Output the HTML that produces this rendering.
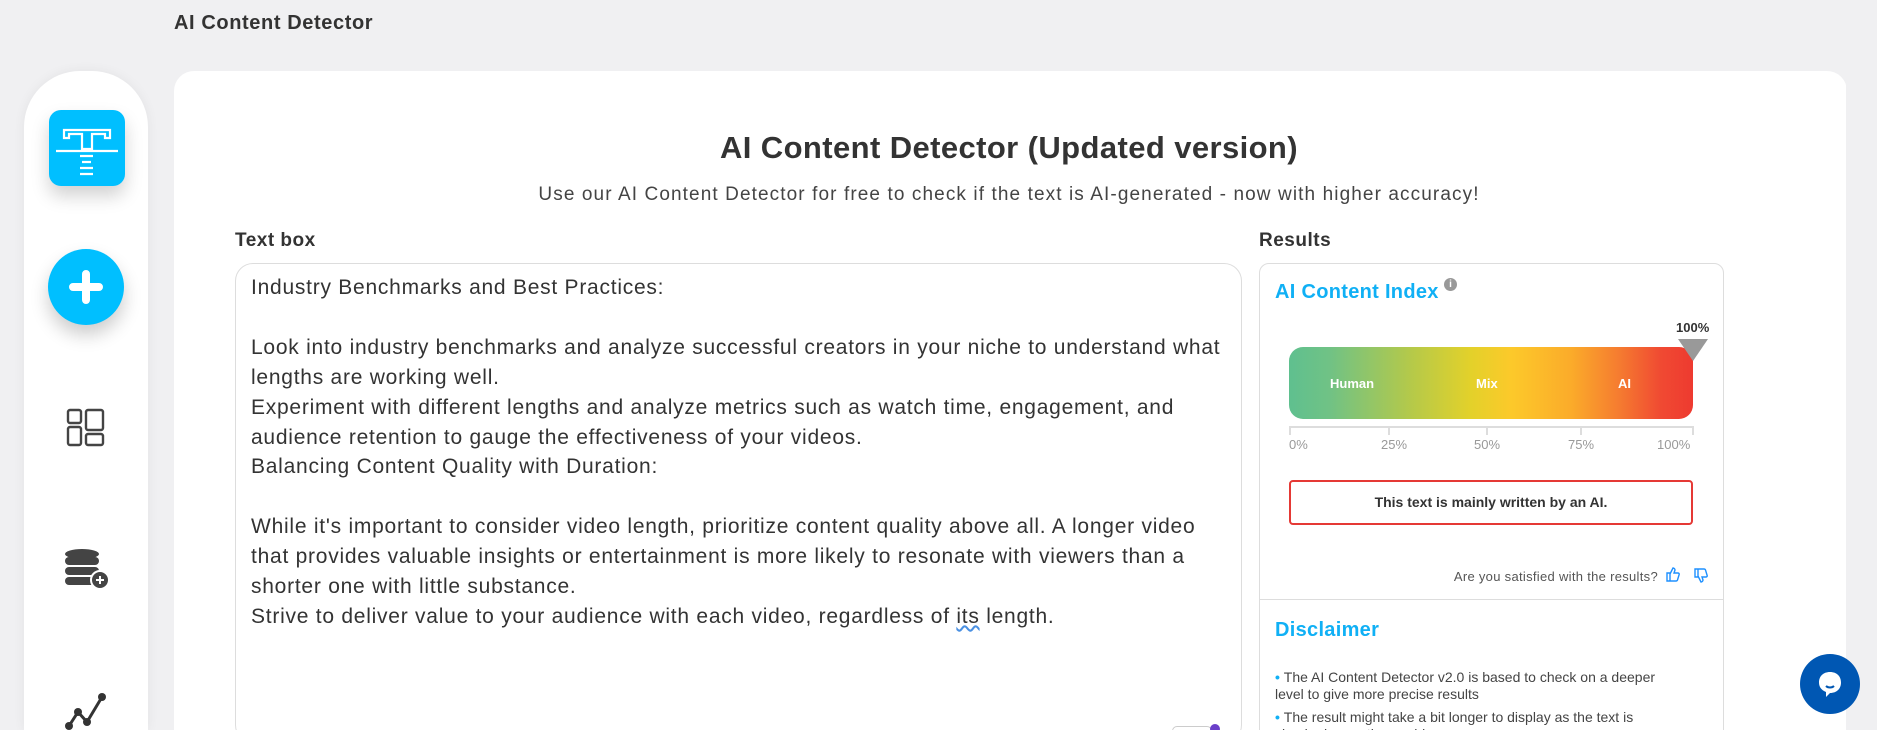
<!DOCTYPE html>
<html><head><meta charset="utf-8"><style>
*{margin:0;padding:0;box-sizing:border-box}
html{width:1877px;height:730px;overflow:hidden}
body{width:1877px;height:730px;overflow:hidden;background:#f0f0f2;font-family:"Liberation Sans",sans-serif;color:#333;position:relative}
.abs{position:absolute}
.hdr{left:174px;top:12px;font-size:20px;font-weight:bold;color:#333;letter-spacing:.6px}
.side{left:24px;top:71px;width:124px;height:659px;background:#fff;border-radius:56px 56px 0 0;box-shadow:0 0 12px rgba(0,0,0,.06)}
.logo{left:49px;top:110px;width:76px;height:76px;background:#00bfff;border-radius:12px;box-shadow:0 10px 18px rgba(0,0,0,.18)}
.plus{left:48px;top:249px;width:76px;height:76px;border-radius:50%;background:#00bfff;box-shadow:0 10px 18px rgba(0,0,0,.2)}
.card{left:174px;top:71px;width:1673px;height:659px;background:#fff;border-radius:20px 20px 0 0}
.title{left:174px;width:1670px;top:130px;text-align:center;font-size:31px;font-weight:bold;color:#333;letter-spacing:.4px}
.sub{left:174px;width:1670px;top:184px;text-align:center;font-size:19px;color:#444;letter-spacing:1.1px}
.lbl{font-size:19px;font-weight:bold;color:#333;top:230px;letter-spacing:.5px}
.ta{left:235px;top:263px;width:1007px;height:480px;border:1px solid #ddd;border-radius:18px;background:#fff}
.txt{left:251px;top:273px;font-size:21px;line-height:29.9px;color:#333;white-space:pre;letter-spacing:.75px}
.res{left:1259px;top:263px;width:465px;height:480px;border:1px solid #ddd;border-radius:10px;background:#fff}
.blue{color:#10b0f5;font-weight:bold;font-size:20px;letter-spacing:.3px}
.bar{left:1289px;top:347px;width:404px;height:72px;border-radius:14px;background:linear-gradient(90deg,#5fc08f 0%,#70c285 10%,#b4c94a 30%,#e3d12a 45%,#fcc92a 55%,#fbab2a 70%,#f57a30 82%,#f04a32 92%,#ee3a30 100%)}
.bl{color:#fff;font-weight:bold;font-size:13px;top:376px}
.pc{color:#999;font-size:13px;top:437px}
.box{left:1289px;top:480px;width:404px;height:45px;border:2px solid #e53935;border-radius:4px;text-align:center;line-height:41px;font-weight:bold;font-size:14px;color:#333}
.dis{font-size:14px;color:#444;line-height:17px;left:1275px;width:440px;white-space:nowrap}
.dis b{color:#10b0f5}
</style></head><body>
<div class="abs hdr">AI Content Detector</div>
<div class="abs side"></div>
<div class="abs logo"><svg width="76" height="76" viewBox="0 0 76 76"><g fill="none" stroke="#fff" stroke-width="2.2"><path d="M15 20h46v8h-5v-4H43v15H33V24H20v4h-5z"/><path d="M7 41h62"/><path d="M31 46h13M33 52h9M31 58h13M31 64h13"/></g></svg></div>
<div class="abs plus"><svg width="76" height="76" viewBox="0 0 76 76"><path d="M38 25v26M25 38h26" stroke="#fff" stroke-width="8" stroke-linecap="round"/></svg></div>
<svg class="abs" style="left:66px;top:408px" width="40" height="40" viewBox="0 0 40 40"><g fill="none" stroke="#444" stroke-width="2.4"><rect x="2" y="2" width="13" height="13" rx="2"/><rect x="2" y="19" width="13" height="18" rx="2"/><rect x="20" y="2" width="17" height="20" rx="2"/><rect x="20" y="26" width="17" height="11" rx="2"/></g></svg>
<svg class="abs" style="left:62px;top:548px" width="52" height="44" viewBox="0 0 52 44"><g fill="#444"><ellipse cx="20" cy="6" rx="17" ry="5"/><rect x="3" y="9" width="34" height="8" rx="4"/><rect x="3" y="19" width="34" height="8" rx="4"/><rect x="3" y="29" width="34" height="8" rx="4"/></g><circle cx="38" cy="32" r="9" fill="#444" stroke="#fff" stroke-width="2"/><path d="M38 28v8M34 32h8" stroke="#fff" stroke-width="2"/></svg>
<svg class="abs" style="left:64px;top:690px" width="44" height="40" viewBox="0 0 44 40"><g fill="none" stroke="#333" stroke-width="3"><path d="M5 36L14 22l9 10 15-25"/></g><g fill="#333"><circle cx="5" cy="36" r="4"/><circle cx="14" cy="22" r="4"/><circle cx="23" cy="32" r="4"/><circle cx="38" cy="7" r="4"/></g></svg>
<div class="abs card"></div>
<div class="abs title">AI Content Detector (Updated version)</div>
<div class="abs sub">Use our AI Content Detector for free to check if the text is AI-generated - now with higher accuracy!</div>
<div class="abs lbl" style="left:235px">Text box</div>
<div class="abs lbl" style="left:1259px">Results</div>
<div class="abs ta"></div>
<div class="abs txt">Industry Benchmarks and Best Practices:

Look into industry benchmarks and analyze successful creators in your niche to understand what
lengths are working well.
Experiment with different lengths and analyze metrics such as watch time, engagement, and
audience retention to gauge the effectiveness of your videos.
Balancing Content Quality with Duration:

While it's important to consider video length, prioritize content quality above all. A longer video
that provides valuable insights or entertainment is more likely to resonate with viewers than a
shorter one with little substance.
Strive to deliver value to your audience with each video, regardless of <span style="text-decoration:underline wavy #4a90e2">its</span> length.</div>
<div class="abs" style="left:1172px;top:726px;width:40px;height:10px;border:1px solid #ccc;border-radius:8px"></div>
<div class="abs" style="left:1210px;top:724px;width:10px;height:10px;border-radius:50%;background:#6a3fc9"></div>
<div class="abs res"></div>
<div class="abs blue" style="left:1275px;top:281px">AI Content Index</div>
<div class="abs" style="left:1444px;top:278px;width:13px;height:13px;border-radius:50%;background:#999;color:#fff;font-size:10px;font-weight:bold;text-align:center;line-height:13px">i</div>
<div class="abs" style="left:1676px;top:320px;font-size:13px;font-weight:bold;color:#333">100%</div>
<div class="abs bar"></div>
<svg class="abs" style="left:1678px;top:339px" width="30" height="22"><path d="M0 0h30L15 22z" fill="#999"/></svg>
<div class="abs bl" style="left:1330px">Human</div>
<div class="abs bl" style="left:1476px">Mix</div>
<div class="abs bl" style="left:1618px">AI</div>
<div class="abs" style="left:1289px;top:426px;width:405px;height:2px;background:#ddd"></div>
<div class="abs" style="left:1289px;top:426px;width:2px;height:9px;background:#ddd"></div>
<div class="abs" style="left:1388px;top:426px;width:2px;height:9px;background:#ddd"></div>
<div class="abs" style="left:1486px;top:426px;width:2px;height:9px;background:#ddd"></div>
<div class="abs" style="left:1580px;top:426px;width:2px;height:9px;background:#ddd"></div>
<div class="abs" style="left:1692px;top:426px;width:2px;height:9px;background:#ddd"></div>
<div class="abs pc" style="left:1289px">0%</div>
<div class="abs pc" style="left:1381px">25%</div>
<div class="abs pc" style="left:1474px">50%</div>
<div class="abs pc" style="left:1568px">75%</div>
<div class="abs pc" style="left:1657px">100%</div>
<div class="abs box">This text is mainly written by an AI.</div>
<div class="abs" style="left:1360px;top:569px;width:298px;text-align:right;font-size:13px;color:#555;letter-spacing:.3px">Are you satisfied with the results?</div>
<svg class="abs" style="left:1666px;top:566px" width="14" height="16" viewBox="0 0 14 16"><path d="M1 7h3v8H1zM4 8l3-6c1 0 2 1 2 2l-1 3h4c1 0 1.5 1 1 2l-1.5 5c-.3.7-1 1-1.5 1H4" fill="none" stroke="#1e90ff" stroke-width="1.4"/></svg>
<svg class="abs" style="left:1694px;top:568px" width="14" height="16" viewBox="0 0 14 16"><path d="M1 1h3v8H1zM4 8l3 6c1 0 2-1 2-2l-1-3h4c1 0 1.5-1 1-2l-1.5-5C11.2 1.3 10.5 1 10 1H4" fill="none" stroke="#1e90ff" stroke-width="1.4"/></svg>
<div class="abs" style="left:1260px;top:599px;width:463px;height:1px;background:#ddd"></div>
<div class="abs blue" style="left:1275px;top:619px">Disclaimer</div>
<div class="abs dis" style="top:669px"><b>• </b>The AI Content Detector v2.0 is based to check on a deeper<br>level to give more precise results</div>
<div class="abs dis" style="top:709px"><b>• </b>The result might take a bit longer to display as the text is<br>checked more thoroughly</div>
<div class="abs" style="left:1846px;top:0;width:31px;height:730px;background:#f0f0f2"></div>
<div class="abs" style="left:1800px;top:654px;width:60px;height:60px;border-radius:50%;background:#0057b3"></div>
<svg class="abs" style="left:1814px;top:668px" width="32" height="32" viewBox="0 0 32 32"><path d="M16 4c7 0 11 4.5 11 10.5S23 25 16 25l-4 4v-5C7 22 5 18.5 5 14.5 5 8.5 9 4 16 4z" fill="#fff"/><path d="M12 18c2 2 6 2 8 0" stroke="#0057b3" stroke-width="2" fill="none"/></svg>
</body></html>
